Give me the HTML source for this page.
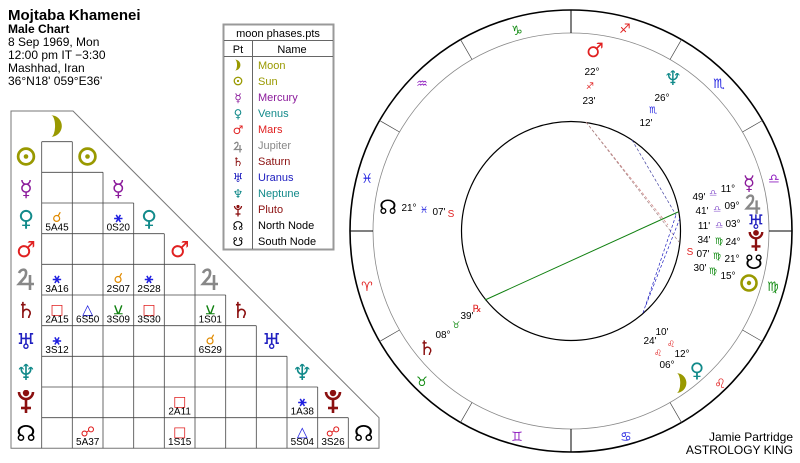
<!DOCTYPE html>
<html><head><meta charset="utf-8"><style>
html,body{margin:0;padding:0;background:#fff;}
svg{display:block;font-family:"Liberation Sans","DejaVu Sans",sans-serif;}
.g{font-family:"DejaVu Sans",sans-serif;}
</style></head><body>
<svg width="800" height="463" viewBox="0 0 800 463" xmlns="http://www.w3.org/2000/svg">
<defs>
<symbol id="moon" viewBox="-10 -10 20 20"><path d="M-5,-9 A9 9 0 0 1 -5 9 A3 8 0 0 0 -5 -9 Z"/></symbol>
<symbol id="sun" viewBox="-10 -10 20 20"><circle r="7.5" fill="none" stroke="currentColor" stroke-width="2.6"/><circle r="2.2"/></symbol>
<symbol id="pluto" viewBox="-10 -12 20 24"><g fill="none" stroke="currentColor" stroke-width="2.6"><path d="M-7,-10 A7 7 0 0 0 7 -10"/><line x1="0" y1="-3" x2="0" y2="11"/><line x1="-5" y1="6" x2="5" y2="6"/></g><circle cx="0" cy="-9" r="3.2"/></symbol>
<symbol id="jup" viewBox="-10 -12 20 24"><g fill="none" stroke="currentColor" stroke-width="2.6"><path d="M-7,-6 C-5,-11 3,-11 -1,-2 L-7,5 L8,5"/><line x1="4" y1="-4" x2="4" y2="11"/></g></symbol>
</defs>
<rect width="800" height="463" fill="#fff"/>
<text x="8" y="20" font-size="15" font-weight="bold">Mojtaba Khamenei</text>
<text x="8" y="33" font-size="12" font-weight="bold">Male Chart</text>
<g font-size="12"><text x="8" y="46">8 Sep 1969, Mon</text><text x="8" y="59">12:00 pm  IT −3:30</text><text x="8" y="72">Mashhad, Iran</text><text x="8" y="85">36°N18' 059°E36'</text></g>
<rect x="223.5" y="24.5" width="110" height="225" fill="#fff" stroke="#999" stroke-width="2"/>
<g stroke="#666" stroke-width="1"><line x1="224" y1="40.5" x2="333" y2="40.5"/><line x1="224" y1="56.5" x2="333" y2="56.5"/><line x1="252.5" y1="41" x2="252.5" y2="249"/></g>
<g font-size="11"><text x="278" y="37" text-anchor="middle">moon phases.pts</text><text x="238" y="53" text-anchor="middle">Pt</text><text x="292" y="53" text-anchor="middle">Name</text>
<text x="258" y="69" fill="#999900">Moon</text><text x="258" y="85" fill="#999900">Sun</text><text x="258" y="101" fill="#8b1a9b">Mercury</text><text x="258" y="117" fill="#128a8a">Venus</text><text x="258" y="133" fill="#e02020">Mars</text><text x="258" y="149" fill="#888">Jupiter</text><text x="258" y="165" fill="#8b1010">Saturn</text><text x="258" y="181" fill="#2020c0">Uranus</text><text x="258" y="197" fill="#128a8a">Neptune</text><text x="258" y="213" fill="#8b1010">Pluto</text><text x="258" y="229">North Node</text><text x="258" y="245">South Node</text></g>
<use href="#moon" x="232" y="59" width="12" height="12" fill="#999900"/>
<use href="#sun" x="233" y="76" width="10" height="10" fill="#999900" color="#999900"/>
<use href="#jup" x="233" y="141" width="10" height="12" fill="#888" color="#888"/>
<use href="#pluto" x="233" y="205" width="10" height="12" fill="#8b1010" color="#8b1010"/>
<g class="g" font-size="12" text-anchor="middle" font-weight="bold"><text x="238" y="102" fill="#8b1a9b">☿</text><text x="238" y="118" fill="#128a8a">♀</text><text x="238" y="134" fill="#e02020">♂</text><text x="238" y="166" fill="#8b1010">♄</text><text x="238" y="182" fill="#2020c0">♅</text><text x="238" y="198" fill="#128a8a">♆</text><text x="238" y="230">☊</text><text x="238" y="246">☋</text></g>
<polygon points="11,111 73,111 379,417.7 379,448.3 11,448.3" fill="none" stroke="#777" stroke-width="1"/>
<g stroke="#444" stroke-width="0.8">
<line x1="41.7" y1="141.7" x2="72.3" y2="141.7"/><line x1="41.7" y1="172.3" x2="103" y2="172.3"/><line x1="41.7" y1="203" x2="133.7" y2="203"/><line x1="41.7" y1="233.7" x2="164.3" y2="233.7"/><line x1="41.7" y1="264.3" x2="195" y2="264.3"/><line x1="41.7" y1="295" x2="225.7" y2="295"/><line x1="41.7" y1="325.7" x2="256.3" y2="325.7"/><line x1="41.7" y1="356.3" x2="287" y2="356.3"/><line x1="41.7" y1="387" x2="317.7" y2="387"/><line x1="41.7" y1="417.7" x2="348.3" y2="417.7"/>
<line x1="41.7" y1="141.7" x2="41.7" y2="448.3"/><line x1="72.3" y1="141.7" x2="72.3" y2="448.3"/><line x1="103" y1="172.3" x2="103" y2="448.3"/><line x1="133.7" y1="203" x2="133.7" y2="448.3"/><line x1="164.3" y1="233.7" x2="164.3" y2="448.3"/><line x1="195" y1="264.3" x2="195" y2="448.3"/><line x1="225.7" y1="295" x2="225.7" y2="448.3"/><line x1="256.3" y1="325.7" x2="256.3" y2="448.3"/><line x1="287" y1="356.3" x2="287" y2="448.3"/><line x1="317.7" y1="387" x2="317.7" y2="448.3"/><line x1="348.3" y1="417.7" x2="348.3" y2="448.3"/>
</g>
<use href="#moon" x="45" y="114" width="24" height="24" fill="#999900"/>
<use href="#sun" x="77" y="146" width="21" height="21" fill="#999900" color="#999900"/>
<use href="#sun" x="15.5" y="146" width="21" height="21" fill="#999900" color="#999900"/>
<use href="#jup" x="200" y="267" width="20" height="24" fill="#888" color="#888"/>
<use href="#jup" x="16" y="267" width="20" height="24" fill="#888" color="#888"/>
<use href="#pluto" x="323" y="390" width="20" height="24" fill="#8b1010" color="#8b1010"/>
<use href="#pluto" x="16" y="390" width="20" height="24" fill="#8b1010" color="#8b1010"/>
<g class="g" font-size="22" text-anchor="middle" font-weight="bold">
<text x="118.3" y="196" fill="#8b1a9b">☿</text><text x="26" y="196" fill="#8b1a9b">☿</text>
<text x="149" y="226" fill="#128a8a">♀</text><text x="26" y="226" fill="#128a8a">♀</text>
<text x="179.7" y="257" fill="#e02020">♂</text><text x="26" y="257" fill="#e02020">♂</text>
<text x="241" y="318" fill="#8b1010">♄</text><text x="26" y="318" fill="#8b1010">♄</text>
<text x="271.7" y="349" fill="#2020c0">♅</text><text x="26" y="349" fill="#2020c0">♅</text>
<text x="302.3" y="380" fill="#128a8a">♆</text><text x="26" y="380" fill="#128a8a">♆</text>
<text x="363.7" y="441" fill="#000">☊</text><text x="26" y="441" fill="#000">☊</text>
</g>
<g class="g" font-size="14" text-anchor="middle" font-weight="bold">
<text x="57" y="222" fill="#e08a00">☌</text><text x="118.3" y="222" fill="#2020e0">⚹</text>
<text x="57" y="283" fill="#2020e0">⚹</text><text x="118.3" y="283" fill="#e08a00">☌</text><text x="149" y="283" fill="#2020e0">⚹</text>
<text x="57" y="314" fill="#e02020">□</text><text x="87.7" y="314" fill="#2020e0">△</text><text x="118.3" y="314" fill="#108010">⚺</text><text x="149" y="314" fill="#e02020">□</text><text x="210.3" y="314" fill="#108010">⚺</text>
<text x="57" y="344.7" fill="#2020e0">⚹</text><text x="210.3" y="344.7" fill="#e08a00">☌</text>
<text x="179.7" y="406" fill="#e02020">□</text><text x="302.3" y="406" fill="#2020e0">⚹</text>
<text x="87.7" y="436.7" fill="#e02020">☍</text><text x="179.7" y="436.7" fill="#e02020">□</text><text x="302.3" y="436.7" fill="#2020e0">△</text><text x="333" y="436.7" fill="#e02020">☍</text>
</g>
<g font-size="10" text-anchor="middle">
<text x="57" y="230.5">5A45</text><text x="118.3" y="230.5">0S20</text>
<text x="57" y="292">3A16</text><text x="118.3" y="292">2S07</text><text x="149" y="292">2S28</text>
<text x="57" y="322.5">2A15</text><text x="87.7" y="322.5">6S50</text><text x="118.3" y="322.5">3S09</text><text x="149" y="322.5">3S30</text><text x="210.3" y="322.5">1S01</text>
<text x="57" y="353">3S12</text><text x="210.3" y="353">6S29</text>
<text x="179.7" y="414.5">2A11</text><text x="302.3" y="414.5">1A38</text>
<text x="87.7" y="445">5A37</text><text x="179.7" y="445">1S15</text><text x="302.3" y="445">5S04</text><text x="333" y="445">3S26</text>
</g>
<circle cx="571" cy="231" r="221" fill="none" stroke="#000" stroke-width="1.6"/>
<circle cx="571" cy="231" r="198" fill="none" stroke="#888" stroke-width="0.8"/>
<circle cx="571" cy="231" r="109.5" fill="none" stroke="#000" stroke-width="1.2"/>
<g stroke="#000" stroke-width="1">
<line x1="769" y1="231" x2="792" y2="231"/><line x1="571" y1="33" x2="571" y2="10"/><line x1="373" y1="231" x2="350" y2="231"/><line x1="571" y1="429" x2="571" y2="452"/>
</g>
<g stroke="#444" stroke-width="0.7">
<line x1="742.5" y1="132" x2="762.4" y2="120.5"/><line x1="670" y1="59.5" x2="681.5" y2="39.6"/><line x1="472" y1="59.5" x2="460.5" y2="39.6"/><line x1="399.5" y1="132" x2="379.6" y2="120.5"/><line x1="399.5" y1="330" x2="379.6" y2="341.5"/><line x1="472" y1="402.5" x2="460.5" y2="422.4"/><line x1="670" y1="402.5" x2="681.5" y2="422.4"/><line x1="742.5" y1="330" x2="762.4" y2="341.5"/>
</g>
<g class="g" font-size="13" text-anchor="middle" font-weight="bold">
<text x="517" y="35" fill="#108a10">♑</text><text x="625" y="33" fill="#e02020">♐</text><text x="719" y="88" fill="#2020e0">♏</text><text x="774" y="183" fill="#9020c0">♎</text><text x="773" y="291" fill="#108a10">♍</text><text x="720" y="388" fill="#e02020">♌</text><text x="626" y="441" fill="#2020e0">♋</text><text x="517" y="441" fill="#9020c0">♊</text><text x="422" y="386" fill="#108a10">♉</text><text x="367" y="291" fill="#e02020">♈</text><text x="367" y="183" fill="#2020e0">♓</text><text x="422" y="88" fill="#9020c0">♒</text>
</g>
<line x1="485" y1="300" x2="678" y2="212" stroke="#108010" stroke-width="1"/>
<g stroke-dasharray="3,2" stroke-width="0.7" fill="none">
<line x1="586" y1="122" x2="668" y2="225" stroke="#d08080"/><line x1="586" y1="122" x2="679" y2="242" stroke="#a08080"/>
<line x1="632" y1="140" x2="676" y2="215" stroke="#4040a0"/><line x1="643" y1="313" x2="676" y2="215" stroke="#2020c0"/><line x1="646" y1="305" x2="680" y2="218" stroke="#2020c0"/>
</g>
<use href="#moon" x="671" y="372" width="22" height="22" fill="#999900"/>
<use href="#sun" x="739" y="273" width="20" height="20" fill="#999900" color="#999900"/>
<use href="#jup" x="744" y="193" width="18" height="22" fill="#888" color="#888"/>
<use href="#pluto" x="747" y="230" width="18" height="22" fill="#8b1010" color="#8b1010"/>
<g class="g" text-anchor="middle" font-weight="bold" font-size="20">
<text x="595" y="57" fill="#e02020">♂</text><text x="673" y="85" fill="#128a8a">♆</text><text x="749" y="190" fill="#8b1a9b">☿</text><text x="756" y="229" fill="#2020c0">♅</text><text x="754" y="269" fill="#000">☋</text><text x="697" y="377" fill="#128a8a">♀</text><text x="427" y="355" fill="#8b1010">♄</text><text x="388" y="214" fill="#000">☊</text>
</g>
<g class="g" text-anchor="middle" font-size="9" font-weight="bold">
<text x="590" y="89" fill="#e02020">♐</text><text x="653" y="113" fill="#2020e0">♏</text><text x="713" y="196" fill="#9060d0">♎</text><text x="717" y="212" fill="#9060d0">♎</text><text x="719" y="228" fill="#9060d0">♎</text><text x="719" y="244" fill="#108a10">♍</text><text x="717" y="259" fill="#108a10">♍</text><text x="713" y="274" fill="#108a10">♍</text><text x="658" y="356" fill="#e02020">♌</text><text x="671" y="347" fill="#e02020">♌</text><text x="456" y="328" fill="#108a10">♉</text><text x="424" y="213" fill="#2020e0">♓</text>
</g>
<g font-size="10" text-anchor="middle">
<text x="592" y="75">22°</text><text x="589" y="104">23'</text><text x="662" y="101">26°</text><text x="646" y="126">12'</text>
<text x="728" y="192">11°</text><text x="699" y="200">49'</text><text x="732" y="209">09°</text><text x="702" y="214">41'</text><text x="733" y="227">03°</text><text x="704" y="229">11'</text><text x="733" y="245">24°</text><text x="704" y="243">34'</text><text x="732" y="262">21°</text><text x="703" y="257">07'</text><text x="728" y="279">15°</text><text x="700" y="271">30'</text>
<text x="667" y="368">06°</text><text x="650" y="344">24'</text><text x="682" y="357">12°</text><text x="662" y="335">10'</text>
<text x="443" y="338">08°</text><text x="467" y="319">39'</text><text x="409" y="211">21°</text><text x="439" y="215">07'</text>
<text x="690" y="255" fill="#e02020">S</text><text x="451" y="217" fill="#e02020">S</text><text x="477" y="312" fill="#e02020">℞</text>
</g>
<g font-size="12" text-anchor="end"><text x="793" y="441">Jamie Partridge</text><text x="793" y="454">ASTROLOGY KING</text></g>
</svg>
</body></html>
